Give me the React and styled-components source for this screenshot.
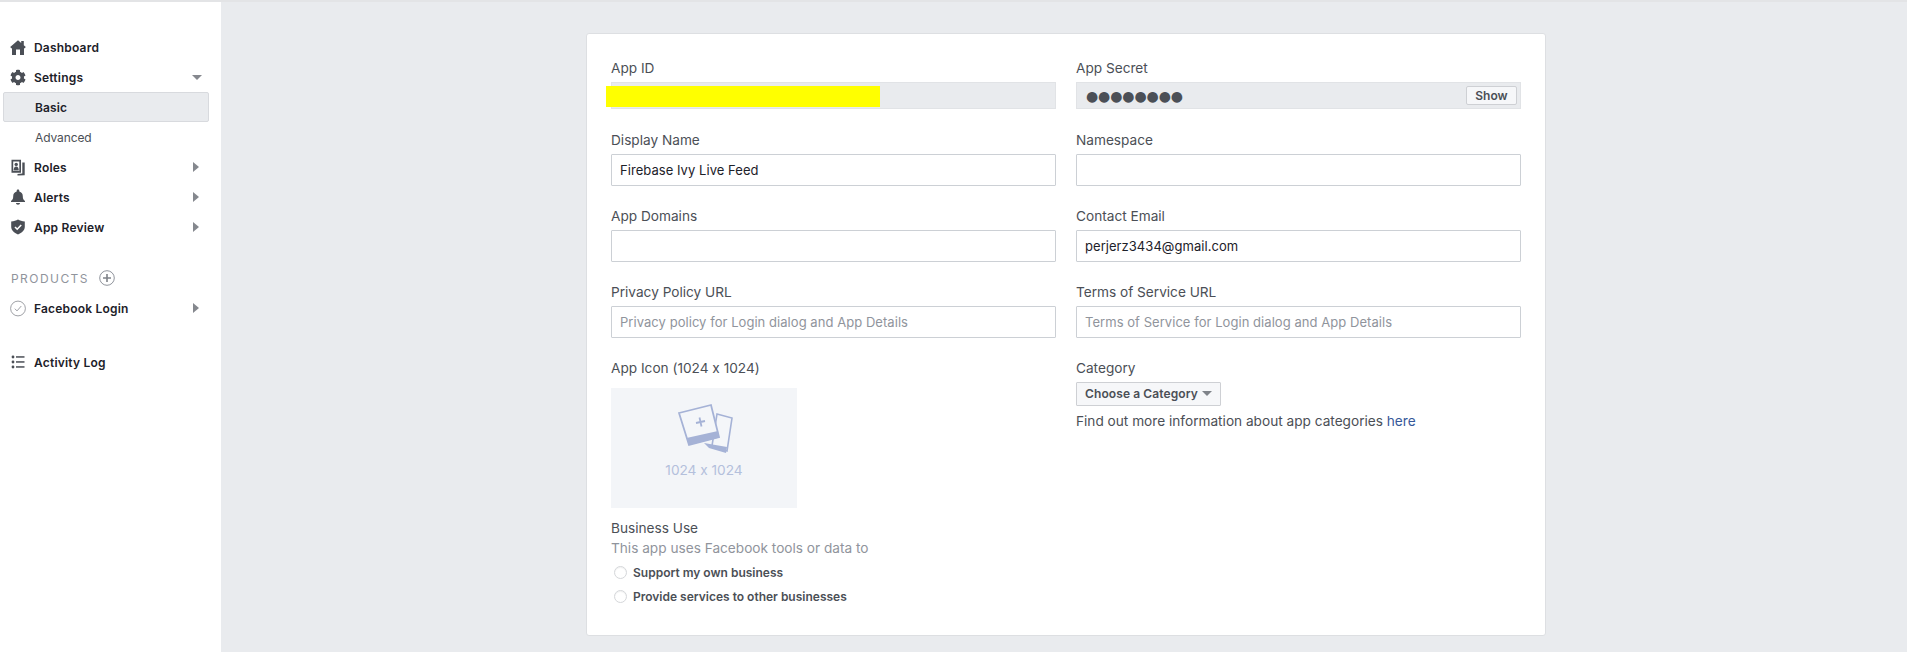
import React from 'react'
import styled, { createGlobalStyle } from 'styled-components'
import { FaCog } from 'react-icons/fa'

const GlobalStyle = createGlobalStyle`
  html, body {
    margin: 0;
    padding: 0;
    height: 100%;
    overflow: hidden;
    background: #e9ebee;
    font-family: Inter, "Liberation Sans", sans-serif;
    font-feature-settings: "calt" 0;
    color: #1d2129;
  }
  * { box-sizing: border-box; }
`

function HomeIcon() {
  return (
    <svg width="17" height="17" viewBox="0 0 16 16">
      <path fill="#4b4f56" d="M8 .8l3.200 2.700V1.500h2.600v4.200L15.800 7.600 14.500 9l-.5-.4V15.400H10V10H6v5.400H2V8.600l-.5.4L.2 7.600z" />
    </svg>
  )
}

function RolesIcon() {
  return (
    <svg width="16" height="17" viewBox="0 0 16 17">
      <path fill="#4b4f56" fillRule="evenodd" d="M1.500.8h9.500v13H1.500zM3.200 2.500v9.600h6.100V2.500z" />
      <circle cx="6.200" cy="5.400" r="1.700" fill="#4b4f56" />
      <path fill="#4b4f56" d="M3.600 11.500c0-2.700 1.100-4 2.600-4s2.600 1.300 2.600 4z" />
      <path fill="#4b4f56" d="M12.300 3.500h2.400v12.700L7.500 16.600V15l4.800-.4z" />
    </svg>
  )
}

function BellIcon() {
  return (
    <svg width="16" height="16" viewBox="0 0 16 16">
      <path fill="#4b4f56" d="M8 .6c.8 0 1.300.5 1.300 1.300v.5c2.300.6 3.500 2.400 3.500 4.800 0 2.200.5 3.400 2.200 4.900v1H1v-1c1.700-1.500 2.200-2.700 2.200-4.900 0-2.400 1.200-4.200 3.500-4.800v-.5C6.700 1.100 7.200.6 8 .6z" />
      <path fill="#4b4f56" d="M6 14h4c0 1-.9 1.700-2 1.700S6 15 6 14z" />
    </svg>
  )
}

function ShieldIcon() {
  return (
    <svg width="16" height="16" viewBox="0 0 16 16">
      <path fill="#4b4f56" d="M8 .5c2 1.200 4 1.800 6.800 2v5.300c0 3.500-2.800 6.200-6.800 7.700-4-1.500-6.800-4.200-6.800-7.700V2.500C4 2.300 6 1.700 8 .5z" />
      <path fill="none" stroke="#fff" strokeWidth="1.600" d="M5 8l2.200 2.200L11.200 6" />
    </svg>
  )
}

function CheckCircle() {
  return (
    <svg width="17" height="17" viewBox="0 0 16 16">
      <circle cx="8" cy="8" r="7.400" fill="none" stroke="#85888e" strokeWidth="0.800" />
      <path fill="none" stroke="#85888e" strokeWidth="0.800" d="M4.800 8.200l2.200 2.200 4.300-4.900" />
    </svg>
  )
}

function PlusCircle() {
  return (
    <svg width="16" height="16" viewBox="0 0 16 16">
      <circle cx="8" cy="8" r="7.300" fill="none" stroke="#90949c" strokeWidth="1" />
      <path fill="none" stroke="#7f8389" strokeWidth="1.600" d="M8 4v8M4 8h8" />
    </svg>
  )
}

function ListIcon() {
  return (
    <svg width="16" height="16" viewBox="0 0 16 16">
      <g fill="#4b4f56">
        <circle cx="3" cy="3" r="1.400" />
        <circle cx="3" cy="8" r="1.400" />
        <circle cx="3" cy="13" r="1.400" />
        <rect x="6" y="2.200" width="8.500" height="1.500" />
        <rect x="6" y="7.200" width="8.500" height="1.500" />
        <rect x="6" y="12.200" width="8.500" height="1.500" />
      </g>
    </svg>
  )
}

function PhotoIcon() {
  return (
    <svg width="60" height="56" viewBox="0 0 60 56">
      <path fill="#f4f6f9" stroke="#a5b2d6" strokeWidth="1.600" d="M43 14l15 4-5 33-15-5z" />
      <path fill="#a5b2d6" d="M30 43l23 4-1 6-17-5z" />
      <path fill="#f4f6f9" stroke="#a5b2d6" strokeWidth="1.800" d="M5 13L37 5l8 32-30 8z" />
      <path fill="#a5b2d6" d="M12.500 38L44 31l1.200 6.400L15 45z" />
      <path fill="none" stroke="#a5b2d6" strokeWidth="1.800" d="M25.500 17.500l2 9M22 23l9-2" />
    </svg>
  )
}

const navTop = [
  { label: 'Dashboard', icon: <HomeIcon /> },
  { label: 'Settings', icon: <FaCog size={17} color="#4b4f56" />, arrow: 'down' },
]

const navBottom = [
  { label: 'Roles', icon: <RolesIcon />, arrow: 'right' },
  { label: 'Alerts', icon: <BellIcon />, arrow: 'right' },
  { label: 'App Review', icon: <ShieldIcon />, arrow: 'right' },
]

function NavItem({ item }) {
  return (
    <NavRow>
      <NavIcon>{item.icon}</NavIcon>
      {item.label}
      {item.arrow && <Arrow $dir={item.arrow} />}
    </NavRow>
  )
}

export default function App() {
  return (
    <Page>
      <GlobalStyle />
      <TopLine />
      <Body>
        <Sidebar>
          {navTop.map((n) => <NavItem key={n.label} item={n} />)}
          <SubItem $active>Basic</SubItem>
          <SubItem>Advanced</SubItem>
          {navBottom.map((n) => <NavItem key={n.label} item={n} />)}
          <ProductsRow>
            PRODUCTS
            <PlusCircle />
          </ProductsRow>
          <NavItem item={{ label: 'Facebook Login', icon: <CheckCircle />, arrow: 'right' }} />
          <LogRow>
            <NavItem item={{ label: 'Activity Log', icon: <ListIcon /> }} />
          </LogRow>
        </Sidebar>

        <Main>
          <Card>
            <FormGrid>
              <div>
                <Label>App ID</Label>
                <ReadOnly>
                  <Scribble />
                </ReadOnly>
              </div>
              <div>
                <Label>App Secret</Label>
                <ReadOnly>
                  <Dots>●●●●●●●●</Dots>
                  <ShowButton>Show</ShowButton>
                </ReadOnly>
              </div>
              <div>
                <Label>Display Name</Label>
                <Field>Firebase Ivy Live Feed</Field>
              </div>
              <div>
                <Label>Namespace</Label>
                <Field />
              </div>
              <div>
                <Label>App Domains</Label>
                <Field />
              </div>
              <div>
                <Label>Contact Email</Label>
                <Field>perjerz3434@gmail.com</Field>
              </div>
              <div>
                <Label>Privacy Policy URL</Label>
                <Field $placeholder>Privacy policy for Login dialog and App Details</Field>
              </div>
              <div>
                <Label>Terms of Service URL</Label>
                <Field $placeholder>Terms of Service for Login dialog and App Details</Field>
              </div>
              <div>
                <Label>App Icon (1024 x 1024)</Label>
                <IconDrop>
                  <PhotoIcon />
                  <IconSize>1024 x 1024</IconSize>
                </IconDrop>
                <BusinessLabel>Business Use</BusinessLabel>
                <Hint>This app uses Facebook tools or data to</Hint>
                <RadioRow>
                  <Radio />
                  Support my own business
                </RadioRow>
                <RadioRow>
                  <Radio />
                  Provide services to other businesses
                </RadioRow>
              </div>
              <div>
                <Label>Category</Label>
                <CategoryButton>
                  Choose a Category
                  <Caret />
                </CategoryButton>
                <Help>
                  Find out more information about app categories <HelpLink>here</HelpLink>
                </Help>
              </div>
            </FormGrid>
          </Card>
        </Main>
      </Body>
    </Page>
  )
}

const Page = styled.div`
  height: 652px;
  display: flex;
  flex-direction: column;
  overflow: hidden;
`
const TopLine = styled.div`
  height: 2px;
  background: #e3e4e6;
  flex: none;
`
const Body = styled.div`
  flex: 1;
  display: flex;
`
const Sidebar = styled.nav`
  width: 221px;
  flex: none;
  background: #fff;
  padding: 30px 12px 0 3px;
`
const NavRow = styled.div`
  height: 30px;
  display: flex;
  align-items: center;
  padding-left: 7px;
  font-size: 12px;
  font-weight: 600;
  letter-spacing: 0.2px;
  color: #1d2129;
`
const NavIcon = styled.span`
  width: 16px;
  height: 16px;
  margin-right: 8px;
  display: flex;
  align-items: center;
  justify-content: center;
`
const Arrow = styled.span`
  margin-left: auto;
  width: 0;
  height: 0;
  border-style: solid;
  ${(p) =>
    p.$dir === 'down'
      ? `
    margin-right: 7px;
    border-width: 5px 5.5px 0 5.5px;
    border-color: #85888e transparent transparent transparent;
  `
      : `
    margin-right: 10px;
    border-width: 5px 0 5px 6px;
    border-color: transparent transparent transparent #85888e;
  `}
`
const SubItem = styled.div`
  height: 30px;
  display: flex;
  align-items: center;
  padding-left: 31px;
  font-size: 12px;
  letter-spacing: ${(p) => (p.$active ? '0.1px' : '-0.1px')};
  font-weight: ${(p) => (p.$active ? 600 : 400)};
  color: ${(p) => (p.$active ? '#1d2129' : '#4b4f56')};
  background: ${(p) => (p.$active ? '#e9ebee' : 'transparent')};
  border: 1px solid ${(p) => (p.$active ? '#d8dade' : 'transparent')};
  border-radius: 2px;
`
const ProductsRow = styled.div`
  height: 30px;
  margin-top: 21px;
  padding-left: 8px;
  display: flex;
  align-items: center;
  gap: 10px;
  font-size: 12px;
  letter-spacing: 1.45px;
  color: #90949c;
`
const LogRow = styled.div`
  margin-top: 24px;
`
const Main = styled.main`
  flex: 1;
  padding: 31px 0 0 365px;
`
const Card = styled.section`
  width: 960px;
  height: 603px;
  background: #fff;
  border: 1px solid #dddfe2;
  border-radius: 3px;
  padding: 25px 24px 0;
`
const FormGrid = styled.div`
  display: grid;
  grid-template-columns: 445px 445px;
  column-gap: 20px;
  row-gap: 21px;
`
const Label = styled.div`
  font-size: 13.65px;
  line-height: 18px;
  margin-bottom: 5px;
  color: #4b4f56;
`
const Field = styled.div`
  height: 32px;
  border: 1px solid #ccd0d5;
  border-radius: 1px;
  background: #fff;
  padding: 0 8px;
  display: flex;
  align-items: center;
  font-size: 13px;
  letter-spacing: 0.05px;
  color: ${(p) => (p.$placeholder ? '#90949c' : '#1d2129')};
`
const ReadOnly = styled.div`
  position: relative;
  height: 27px;
  margin-bottom: 1px;
  background: #e9ebee;
  border: 1px solid #e1e3e6;
  display: flex;
  align-items: center;
  justify-content: space-between;
  padding: 0 3px 0 9px;
`
const Scribble = styled.span`
  position: absolute;
  left: -6px;
  top: 3px;
  width: 274px;
  height: 21px;
  background: #ffff00;
`
const Dots = styled.span`
  font-family: "DejaVu Sans", sans-serif;
  font-size: 14px;
  letter-spacing: -0.1px;
  color: #4b4f56;
`
const ShowButton = styled.span`
  height: 19px;
  width: 51px;
  display: flex;
  align-items: center;
  justify-content: center;
  background: #f6f7f9;
  border: 1px solid #ced0d4;
  border-radius: 2px;
  font-size: 12px;
  font-weight: 600;
  color: #4b4f56;
`
const IconDrop = styled.div`
  width: 186px;
  height: 120px;
  margin-top: 11px;
  background: #f3f5f8;
  display: flex;
  flex-direction: column;
  align-items: center;
  padding-top: 12px;
`
const IconSize = styled.div`
  font-size: 13.65px;
  line-height: 18px;
  margin-top: 5px;
  color: #b4c0dc;
`
const BusinessLabel = styled.div`
  margin-top: 11px;
  font-size: 13.65px;
  line-height: 18px;
  color: #4b4f56;
`
const Hint = styled.div`
  margin-top: 2px;
  margin-bottom: 3px;
  font-size: 13.65px;
  line-height: 18px;
  color: #90949c;
`
const RadioRow = styled.div`
  height: 24px;
  display: flex;
  align-items: center;
  padding-left: 3px;
  gap: 6px;
  font-size: 12px;
  font-weight: 600;
  color: #4b4f56;
`
const Radio = styled.span`
  width: 13px;
  height: 13px;
  border-radius: 50%;
  background: #fff;
  border: 1px solid #d5d7da;
  box-shadow: inset 0 1px 1px rgba(0, 0, 0, 0.06);
  flex: none;
`
const CategoryButton = styled.div`
  display: inline-flex;
  align-items: center;
  gap: 4px;
  width: 145px;
  height: 24px;
  padding-left: 8px;
  margin-top: -1px;
  background: #f6f7f9;
  border: 1px solid #ced0d4;
  border-radius: 1px;
  font-size: 12px;
  font-weight: 600;
  letter-spacing: 0.1px;
  color: #4b4f56;
`
const Caret = styled.span`
  width: 0;
  height: 0;
  border-style: solid;
  border-width: 5px 5px 0 5px;
  border-color: #7f8389 transparent transparent transparent;
`
const Help = styled.div`
  margin-top: 6px;
  font-size: 13.65px;
  line-height: 18px;
  color: #4b4f56;
`
const HelpLink = styled.a`
  color: #365899;
`
